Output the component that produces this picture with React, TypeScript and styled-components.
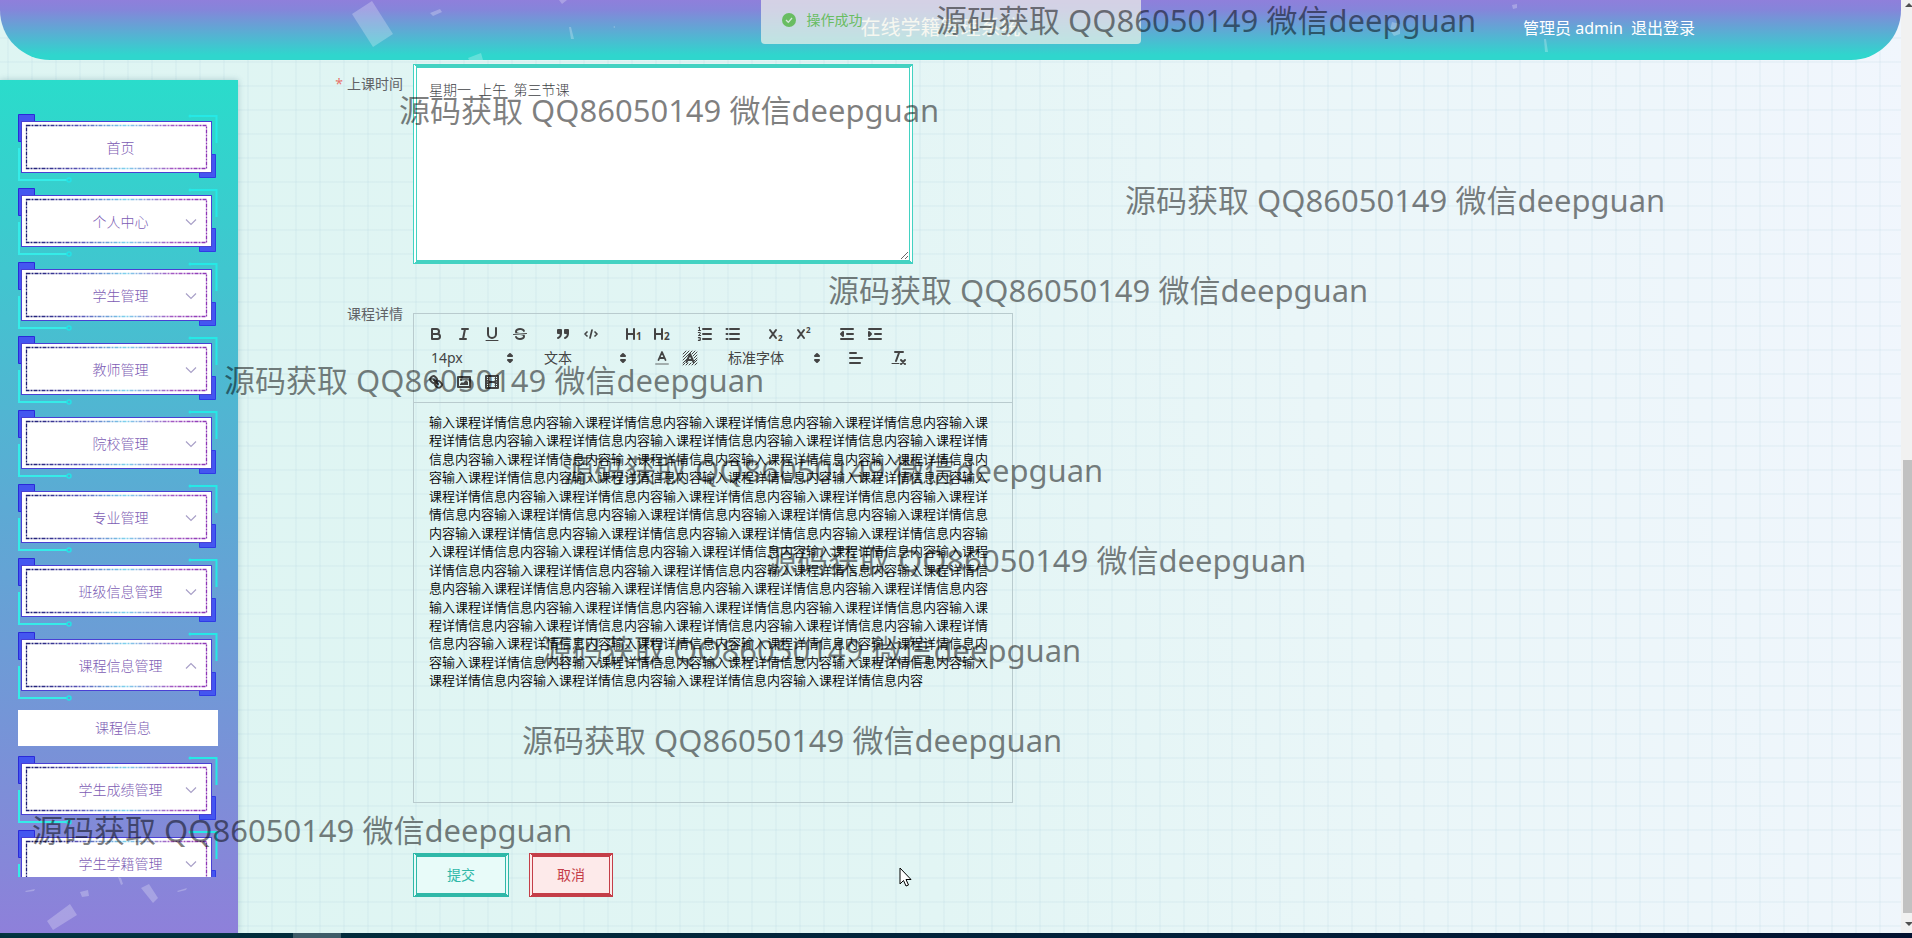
import React from "react";
import styled, { createGlobalStyle } from "styled-components";

const GlobalStyle = createGlobalStyle`
  *, *::before, *::after { box-sizing: border-box; }
  body {
    margin: 0;
    font-family: "Noto Sans", "Noto Sans CJK SC", sans-serif;
    font-size: 14px;
    color: #606266;
  }
  button, select, textarea { font-family: inherit; }
`;

const Page = styled.div`
  position: relative;
  display: flex;
  flex-direction: column;
  height: 100vh;
  overflow: hidden;
`;

const Viewport = styled.div`
  display: flex;
  flex: 1;
  min-height: 0;
`;

const Screen = styled.div`
  position: relative;
  display: flex;
  flex-direction: column;
  flex: 1;
  min-width: 0;
  background-image:
    linear-gradient(90deg, rgba(170, 205, 220, 0.12) 2px, transparent 2px),
    linear-gradient(180deg, rgba(170, 205, 220, 0.12) 2px, transparent 2px),
    linear-gradient(78deg, #ddf5f2 0%, #e2f5f4 45%, #eaf6f8 68%, #f1f6fd 100%);
  background-size: 24px 24px, 24px 24px, 100% 100%;
  background-position: 7px 0, 0 13px, 0 0;
`;

const Header = styled.header`
  position: relative;
  display: grid;
  grid-template-columns: 1fr auto 1fr;
  align-items: center;
  height: 60px;
  flex: none;
  padding: 0 20px 4px 0;
  border-radius: 0 0 50px 50px;
  background: linear-gradient(180deg, #8f7fdb 0%, #8585da 16%, #2fd6cd 92%, #2fd6cd 100%);
  color: #fff;
  overflow: hidden;
`;

const HeaderArt = styled.svg`
  position: absolute;
  left: 0;
  top: 0;
`;

const Title = styled.h1`
  grid-column: 2;
  margin: 0;
  font-size: 20px;
  font-weight: 400;
  line-height: 28px;
`;

const UserBar = styled.div`
  display: flex;
  justify-self: end;
  gap: 8px;
  padding-right: 186px;
  font-size: 16px;
  line-height: 24px;
`;

const LogoutLink = styled.a`
  color: inherit;
  text-decoration: none;
`;

const Message = styled.div`
  position: absolute;
  top: 0;
  left: 50%;
  z-index: 2;
  display: flex;
  align-items: center;
  gap: 10px;
  width: 380px;
  height: 44px;
  margin-left: -190px;
  padding: 0 20px 4px;
  border-radius: 0 0 4px 4px;
  background: rgba(242, 244, 234, 0.7);
  color: #69bd62;
  line-height: 20px;
`;

const Content = styled.div`
  display: flex;
  flex: 1;
  min-height: 0;
`;

const Sidebar = styled.nav`
  display: flex;
  flex-direction: column;
  flex: none;
  width: 238px;
  margin-top: 20px;
  padding-top: 34px;
  background: linear-gradient(180deg, #2adccb 0%, #5caad4 50%, #8e80da 100%);
  box-shadow: 0 0 6px rgba(40, 100, 120, 0.3);
`;

const Menu = styled.ul`
  flex: 1;
  min-height: 0;
  margin: 0;
  padding: 0 20px 0 18px;
  list-style: none;
  overflow: hidden;
`;

const MenuItem = styled.li`
  margin-bottom: 6px;
`;

const MenuButton = styled.button`
  position: relative;
  display: block;
  width: 200px;
  height: 68px;
  padding: 0 0 0 5px;
  border: 0;
  background: none;
  color: #7c5cb4;
  font-size: 14px;
  font-weight: 300;
  line-height: 20px;
  text-align: center;
`;

const MenuLabel = styled.span`
  position: relative;
`;

const FrameArt = styled.svg`
  position: absolute;
  left: 0;
  top: 0;
`;

const Chevron = styled.svg<{ $open?: boolean }>`
  position: absolute;
  right: 21px;
  top: 28px;
  transform: ${(p) => (p.$open ? "rotate(180deg)" : "none")};
`;

const SubLink = styled.a`
  display: block;
  width: 200px;
  margin: 10px 0;
  padding-left: 10px;
  background: #fff;
  color: #7c5cb4;
  font-weight: 300;
  line-height: 36px;
  text-align: center;
  text-decoration: none;
`;

const SidebarArt = styled.svg`
  flex: none;
`;

const Form = styled.form`
  flex: 1;
  min-width: 0;
  padding-top: 4px;
`;

const FormRow = styled.div<{ $gap: number }>`
  display: grid;
  grid-template-columns: 175px 1fr;
  margin-bottom: ${(p) => p.$gap}px;
`;

const FieldLabel = styled.label<{ $required?: boolean }>`
  padding-right: 10px;
  line-height: 40px;
  text-align: right;
  &::before {
    content: ${(p) => (p.$required ? '"*"' : "none")};
    margin-right: 4px;
    color: #e8756c;
  }
`;

const TimeArea = styled.textarea`
  display: block;
  width: 500px;
  height: 200px;
  padding: 11px 12px;
  border: 4px #43d2c2;
  border-style: solid double;
  background: #fff;
  color: #404246;
  font-size: 14px;
  font-weight: 300;
  line-height: 21px;
  outline: none;
`;

const Editor = styled.div`
  width: 600px;
  margin-top: 19px;
  border: 1px solid #b9cbce;
`;

const Toolbar = styled.div`
  display: flex;
  flex-wrap: wrap;
  padding: 8px;
  border-bottom: 1px solid #b9cbce;
`;

const ToolGroup = styled.div`
  display: flex;
  margin-right: 15px;
`;

const ToolButton = styled.button`
  width: 28px;
  height: 24px;
  padding: 3px 5px;
  border: 0;
  background: none;
  svg { display: block; }
`;

const Picker = styled.span<{ $width: number }>`
  position: relative;
  display: flex;
  width: ${(p) => p.$width}px;
  height: 24px;
  margin-right: 15px;
`;

const PickerSelect = styled.select`
  width: 100%;
  padding: 0 2px 0 9px;
  border: 0;
  background: none;
  appearance: none;
  color: #444;
  font-size: 14px;
  line-height: 24px;
`;

const PickerArrow = styled.svg`
  position: absolute;
  right: 1px;
  top: 3px;
  pointer-events: none;
`;

const EditorBody = styled.div`
  min-height: 399px;
  padding: 10px 15px;
  color: #000;
  font-size: 13px;
  font-weight: 350;
  line-height: 1.42;
  outline: none;
`;

const Paragraph = styled.p`
  margin: 0;
`;

const Actions = styled.div`
  display: flex;
  gap: 20px;
  margin-left: 175px;
`;

const ActionButton = styled.button<{ $color: string; $fill: string; $width: number }>`
  width: ${(p) => p.$width}px;
  height: 44px;
  border: 4px ${(p) => p.$color};
  border-style: solid double;
  background: ${(p) => p.$fill};
  color: ${(p) => p.$color};
  font-size: 14px;
  line-height: 20px;
`;

const Scrollbar = styled.div`
  display: flex;
  flex-direction: column;
  align-items: flex-end;
  flex: none;
  width: 11px;
  background: #f1f1f1;
`;

const ScrollSpace = styled.div`
  flex: 443;
`;

const ScrollThumb = styled.div`
  flex: 453;
  width: 9px;
  background: #c1c1c1;
`;

const ScrollArrow = styled.svg`
  flex: none;
`;

const Taskbar = styled.div`
  flex: none;
  height: 5px;
  padding-left: 293px;
  background: linear-gradient(90deg, #02303c, #02203a 60%, #021230);
  &::after {
    content: "";
    display: block;
    width: 48px;
    height: 5px;
    background: #3e5c68;
  }
`;

const Watermark = styled.span<{ $x: number; $y: number }>`
  position: absolute;
  left: ${(p) => p.$x}px;
  top: ${(p) => p.$y}px;
  z-index: 5;
  color: rgba(0, 0, 0, 0.5);
  font-size: 31px;
  line-height: 40px;
  white-space: nowrap;
  pointer-events: none;
`;

const Pointer = styled.svg`
  position: absolute;
  left: 899px;
  top: 867px;
  z-index: 6;
`;

function MenuFrame() {
  return (
    <FrameArt width="200" height="70" viewBox="0 0 200 70" fill="none" aria-hidden="true">
      <defs>
        <linearGradient id="dash" x1="8" x2="189" y1="0" y2="0" gradientUnits="userSpaceOnUse">
          <stop offset="0" stopColor="#191970" />
          <stop offset="0.3" stopColor="#5a55b8" />
          <stop offset="0.55" stopColor="#7fd3ee" />
          <stop offset="0.8" stopColor="#a55cc4" />
          <stop offset="1" stopColor="#8d35b5" />
        </linearGradient>
      </defs>
      <path d="M.5 .5H16.500V27.500H.5Z" fill="#4456f0" stroke="#2a2ad8" />
      <path d="M181.500 40.500H197.500V63.500H181.500Z" fill="#4456f0" stroke="#2f3be6" />
      <path d="M173 2H198.500V29" stroke="#25e9e6" strokeWidth="2" />
      <circle cx="172" cy="2" r="1.500" fill="#25e9e6" />
      <path d="M1 34V66H49" stroke="#35ece8" strokeWidth="2" />
      <circle cx="51" cy="66" r="2" stroke="#25e2e6" strokeWidth="1.500" />
      <rect x="3.500" y="7.500" width="190" height="51" fill="#fff" stroke="#4a40d4" strokeWidth="1" />
      <rect x="8.500" y="11.500" width="180" height="43" stroke="url(#dash)" strokeWidth="1.300" strokeDasharray="4 1 2 1" />
    </FrameArt>
  );
}

type Entry = { label: string; arrow?: boolean; sub?: string };

const entries: Entry[] = [
  { label: "首页" },
  { label: "个人中心", arrow: true },
  { label: "学生管理", arrow: true },
  { label: "教师管理", arrow: true },
  { label: "院校管理", arrow: true },
  { label: "专业管理", arrow: true },
  { label: "班级信息管理", arrow: true },
  { label: "课程信息管理", arrow: true, sub: "课程信息" },
  { label: "学生成绩管理", arrow: true },
  { label: "学生学籍管理", arrow: true },
];

const marks: [number, number][] = [
  [936, 0], [399, 90], [1125, 180], [828, 270], [224, 360],
  [563, 450], [766, 540], [541, 630], [522, 720], [32, 810],
];

const digit = { fill: "#444", stroke: "none", fontFamily: "Open Sans, sans-serif", fontWeight: 700 };

const icons: Record<string, React.ReactNode> = {
  加粗: (
    <>
      <path d="M5 4H9.500A2.500 2.500 0 0 1 9.500 9H5Z" />
      <path d="M5 9H10.500A2.500 2.500 0 0 1 10.500 14H5Z" />
    </>
  ),
  斜体: <path d="M7 4H13M5 14H11M8 14L10 4" />,
  下划线: (
    <>
      <path d="M5 3V9a4 4 0 0 0 8 0V3" />
      <path d="M3 15.500H15" strokeWidth="1" />
    </>
  ),
  删除线: (
    <>
      <path d="M15.500 8.500L2.500 9.500" strokeWidth="1" />
      <path d="M9 8C6.500 7.800 6 7.500 6 6.500 6 5.800 7.300 5 9 5c1.600 0 2.800.7 3 1.300a1 1 0 0 0 1.900-.6C13.400 4.100 11.400 3 9 3 6.200 3 4 4.500 4 6.500a3.200 3.200 0 0 0 .5 1.800Z" fill="#444" stroke="none" />
      <path d="M9 10C11.500 10.200 12 10.500 12 11.500c0 .7-1.300 1.500-3 1.500-1.600 0-2.800-.7-3-1.300a1 1 0 1 0-1.900.6C4.600 13.900 6.600 15 9 15c2.800 0 5-1.500 5-3.500a3.200 3.200 0 0 0-.5-1.800Z" fill="#444" stroke="none" />
    </>
  ),
  引用: (
    <>
      <path d="M4 5H7V8H4ZM11 5H14V8H11Z" fill="#444" />
      <path d="M7 8c0 4-3 5-3 5M14 8c0 4-3 5-3 5" />
    </>
  ),
  代码: <path d="M5 7L3 9L5 11M13 7L15 9L13 11M10 5L8 13" strokeWidth="1.700" />,
  标题一: (
    <>
      <path d="M2 4V14M9 4V14M2 9H9" />
      <text x="11" y="15" fontSize="10" {...digit}>1</text>
    </>
  ),
  标题二: (
    <>
      <path d="M2 4V14M9 4V14M2 9H9" />
      <text x="11" y="15" fontSize="10" {...digit}>2</text>
    </>
  ),
  有序列表: (
    <>
      <path d="M7 4H15M7 9H15M7 14H15" />
      <path d="M2.500 2.700L3.500 2V5.500M2.300 5.500H4.700M2.300 7.500H4.200V9L2.300 10.500H4.700M2.300 12.500H4.300V15.500H2.300M2.800 14H4.300" strokeWidth="1" />
    </>
  ),
  无序列表: <path d="M6 4H15M6 9H15M6 14H15M2.500 4H3.500M2.500 9H3.500M2.500 14H3.500" />,
  下标: (
    <>
      <path d="M3 5L9 13M9 5L3 13" />
      <text x="11" y="16" fontSize="8" {...digit}>2</text>
    </>
  ),
  上标: (
    <>
      <path d="M3 5L9 13M9 5L3 13" />
      <text x="11" y="8" fontSize="8" {...digit}>2</text>
    </>
  ),
  减少缩进: (
    <>
      <path d="M3 14H15M3 4H15M9 9H15" />
      <path d="M5 7V11L3 9Z" fill="#444" />
    </>
  ),
  增加缩进: (
    <>
      <path d="M3 14H15M3 4H15M9 9H15" />
      <path d="M3 7V11L5 9Z" fill="#444" />
    </>
  ),
  文字颜色: (
    <>
      <path d="M3 15H15" opacity="0.4" />
      <path d="M5.500 11L9 3L12.500 11M6.400 9H11.600" strokeWidth="1.800" />
    </>
  ),
  背景颜色: (
    <>
      <path d="M2 5L5 2M2 8L8 2M2 11L11 2M2 14L6 10M11 5L14 2M12 7L16 3M13 9L16 6M13 12L16 9M2 16L4 14M5 16L7 14M8 16L10 14M11 16L16 11M14 16L16 14" strokeWidth="1" />
      <path d="M5.500 13L9 5L12.500 13M6.400 11H11.600" />
    </>
  ),
  对齐: <path d="M3 9H15M3 14H13M3 4H9" />,
  清除格式: (
    <>
      <path d="M5 3H13M6 12L9.300 3M11 11L15 15M15 11L11 15" />
      <path d="M2 14.500H9" strokeWidth="1" />
    </>
  ),
  链接: (
    <>
      <path d="M7 7L11 11" />
      <path d="M8.900 4.600a3.500 3.500 0 0 1 .4 4.700A3.500 3.500 0 0 1 4.600 8.900C3.200 7.500 2 6.400 4.200 4.200S7.500 3.200 8.900 4.600Z" />
      <path d="M13.400 9.100a3.500 3.500 0 0 0-4.700-.4 3.500 3.500 0 0 0 .4 4.700c1.400 1.400 2.500 2.500 4.700.4S14.800 10.500 13.400 9.100Z" />
    </>
  ),
  图片: (
    <>
      <rect x="3" y="4" width="12" height="10" />
      <circle cx="6" cy="7" r="1" fill="#444" stroke="none" />
      <path d="M5 12V11L7 9L8 10L11 7L13 9V12Z" fill="#444" stroke="none" />
    </>
  ),
  视频: (
    <>
      <rect x="3" y="3" width="12" height="12" />
      <path d="M5.500 3V15M12.500 3V15M3 5.500H6M3 7.500H6M3 10.500H6M3 12.500H6M12 5.500H15M12 7.500H15M12 10.500H15M12 12.500H15" strokeWidth="1" />
      <path d="M5 9H13" />
    </>
  ),
};

function Tools({ names }: { names: string[] }) {
  return (
    <ToolGroup>
      {names.map((name) => (
        <ToolButton key={name} type="button" aria-label={name}>
          <svg width="18" height="18" viewBox="0 0 18 18" fill="none" stroke="#444" strokeWidth="2" strokeLinecap="round" strokeLinejoin="round">
            {icons[name]}
          </svg>
        </ToolButton>
      ))}
    </ToolGroup>
  );
}

function ToolPicker({ label, value, width }: { label: string; value: string; width: number }) {
  return (
    <Picker $width={width}>
      <PickerSelect aria-label={label} defaultValue={value}>
        <option>{value}</option>
      </PickerSelect>
      <PickerArrow width="18" height="18" viewBox="0 0 18 18" fill="#444" stroke="#444" strokeWidth="2" strokeLinejoin="round">
        <path d="M7 11L9 13L11 11ZM7 7L9 5L11 7Z" />
      </PickerArrow>
    </Picker>
  );
}

const detail = "输入课程详情信息内容".repeat(64);

export default function App() {
  return (
    <Page>
      <GlobalStyle />
      <Viewport>
        <Screen>
          <Header>
            <HeaderArt width="1600" height="60" viewBox="0 0 1600 60" fill="#fff" fillOpacity="0.25" aria-hidden="true">
              <path d="M352 14L372 1L393 34L373 47Z" />
              <path d="M430 13L440 9L442 12L433 16Z" />
              <path d="M559 0H567L562 4Z" />
              <path d="M569 27H571L574 39H571Z" />
              <path d="M468 58L481 53L483 60H469Z" />
              <path d="M613 27L615 26V28Z" />
              <path d="M1392 22L1400 24V34L1394 36L1390 30Z" />
              <path d="M1512 5L1517 4V8L1513 9Z" />
              <path d="M1544 39H1546L1548 52H1545Z" />
            </HeaderArt>
            <Title>在线学籍管理系统</Title>
            <UserBar>
              <span>管理员 admin</span>
              <LogoutLink href="#logout">退出登录</LogoutLink>
            </UserBar>
          </Header>
          <Message role="status">
            <svg width="16" height="16" viewBox="0 0 16 16" aria-hidden="true">
              <circle cx="8" cy="8" r="7" fill="#69bd62" />
              <path d="M5 8L7.300 10.300L11 6" fill="none" stroke="#d5e8dc" strokeWidth="1.300" />
            </svg>
            操作成功
          </Message>
          <Content>
            <Sidebar>
              <Menu>
                {entries.map((e) => (
                  <MenuItem key={e.label}>
                    <MenuButton type="button">
                      <MenuFrame />
                      <MenuLabel>{e.label}</MenuLabel>
                      {e.arrow && (
                        <Chevron $open={!!e.sub} width="12" height="12" viewBox="0 0 12 12" fill="none" stroke="#a9a0c8" strokeWidth="1.200">
                          <path d="M1 3.500L6 8.500L11 3.500" />
                        </Chevron>
                      )}
                    </MenuButton>
                    {e.sub && <SubLink href="#course">{e.sub}</SubLink>}
                  </MenuItem>
                ))}
              </Menu>
              <SidebarArt width="238" height="56" viewBox="0 877 238 56" fill="#fff" fillOpacity="0.25" aria-hidden="true">
                <path d="M47 921L70 904L77 915L53 930Z" />
                <path d="M80 892L88 890L89 896L82 897Z" />
                <path d="M141 888L149 884L158 898L153 903Z" />
                <path d="M25 891L35 889L34 891L26 892Z" />
                <path d="M177 891L187 888L186 890L178 892Z" />
                <path d="M118 877L121 878L123 884L121 885Z" />
              </SidebarArt>
            </Sidebar>
            <Form>
              <FormRow $gap={30}>
                <FieldLabel htmlFor="time" $required>上课时间</FieldLabel>
                <TimeArea id="time" defaultValue="星期一  上午  第三节课" />
              </FormRow>
              <FormRow $gap={50}>
                <FieldLabel as="span" id="detail-label">课程详情</FieldLabel>
                <Editor>
                  <Toolbar>
                    <Tools names={["加粗", "斜体", "下划线", "删除线"]} />
                    <Tools names={["引用", "代码"]} />
                    <Tools names={["标题一", "标题二"]} />
                    <Tools names={["有序列表", "无序列表"]} />
                    <Tools names={["下标", "上标"]} />
                    <Tools names={["减少缩进", "增加缩进"]} />
                    <ToolPicker label="字号" value="14px" width={98} />
                    <ToolPicker label="标题" value="文本" width={98} />
                    <Tools names={["文字颜色", "背景颜色"]} />
                    <ToolPicker label="字体" value="标准字体" width={108} />
                    <Tools names={["对齐"]} />
                    <Tools names={["清除格式"]} />
                    <Tools names={["链接", "图片", "视频"]} />
                  </Toolbar>
                  <EditorBody contentEditable suppressContentEditableWarning role="textbox" aria-labelledby="detail-label" spellCheck={false}>
                    <Paragraph>{detail}</Paragraph>
                  </EditorBody>
                </Editor>
              </FormRow>
              <Actions>
                <ActionButton type="submit" $color="#2fb8a8" $fill="#e8fbf9" $width={96}>提交</ActionButton>
                <ActionButton type="button" $color="#c43e48" $fill="#fdeaea" $width={84}>取消</ActionButton>
              </Actions>
            </Form>
          </Content>
        </Screen>
        <Scrollbar aria-hidden="true">
          <ScrollArrow width="9" height="17" viewBox="0 0 9 17"><path d="M2 7L6 3L10 7Z" fill="#505050" /></ScrollArrow>
          <ScrollSpace />
          <ScrollThumb />
          <ScrollArrow width="9" height="20" viewBox="0 0 9 20"><path d="M2 9L6 13L10 9Z" fill="#505050" /></ScrollArrow>
        </Scrollbar>
      </Viewport>
      <Taskbar />
      {marks.map(([x, y]) => (
        <Watermark key={y} $x={x} $y={y}>源码获取 QQ86050149 微信deepguan</Watermark>
      ))}
      <Pointer width="14" height="22" viewBox="0 0 14 22" aria-hidden="true">
        <path d="M1 1V17L4.500 13.500L7 19L9.500 18L7 12.500H12Z" fill="#fff" stroke="#000" />
      </Pointer>
    </Page>
  );
}
